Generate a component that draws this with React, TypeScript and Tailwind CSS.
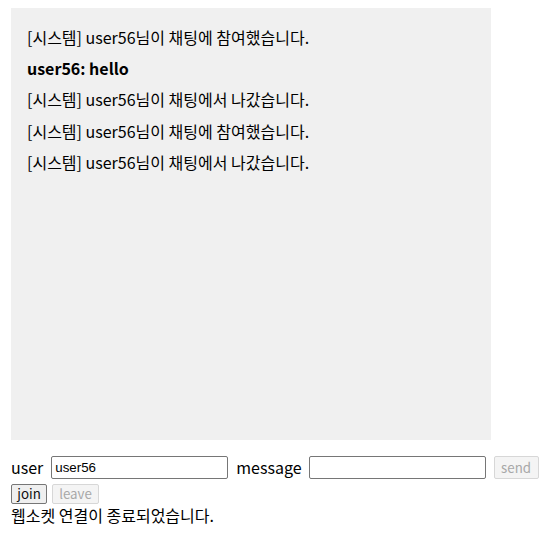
import React from 'react';

const messages = [
  { id: 1, text: '[시스템] user56님이 채팅에 참여했습니다.', bold: false },
  { id: 2, text: 'user56: hello', bold: true },
  { id: 3, text: '[시스템] user56님이 채팅에서 나갔습니다.', bold: false },
  { id: 4, text: '[시스템] user56님이 채팅에 참여했습니다.', bold: false },
  { id: 5, text: '[시스템] user56님이 채팅에서 나갔습니다.', bold: false },
];

const Btn: React.FC<{ label: string; disabled?: boolean; className?: string }> = ({ label, disabled, className }) => (
  <button
    disabled={disabled}
    className={`flex items-center justify-center rounded-[2px] border ${
      disabled ? 'border-[#d7d7d7] bg-[#f4f4f4] text-[#a8a8a8]' : 'border-[#767676] bg-[#efefef] text-[#101010]'
    } ${className ?? ''}`}
  >
    <span className="font-['Noto_Sans_CJK_KR',sans-serif] text-[13.33px] leading-none">{label}</span>
  </button>
);

const App: React.FC = () => {
  return (
    <div className="pt-2 pl-[11px] text-black text-base font-['Noto_Sans_CJK_KR','Noto_Sans',sans-serif]">
      <div className="w-[480px] h-[432px] bg-[#f0f0f0] pt-[14px] px-4">
        {messages.map((m) => (
          <div key={m.id} className={`py-1 leading-[23.2px] ${m.bold ? 'font-bold' : ''}`}>
            {m.text}
          </div>
        ))}
      </div>

      <div className="mt-4 flex items-center h-[23px]">
        <span className="leading-[23px]">user</span>
        <input
          className="ml-2 w-[177px] h-[23px] border border-[#767676] rounded-[2px] px-[3px] text-[13.33px] font-['Liberation_Sans',Arial,sans-serif] outline-none"
          defaultValue="user56"
        />
        <span className="ml-2 leading-[23px]">message</span>
        <input className="ml-[7px] w-[177px] h-[23px] border border-[#767676] rounded-[2px] px-[3px] text-[13.33px] font-['Liberation_Sans',Arial,sans-serif] outline-none" />
        <Btn label="send" disabled className="ml-2 w-[45px] h-[23px]" />
      </div>

      <div className="mt-[5px] flex gap-[5px]">
        <Btn label="join" className="w-9 h-5" />
        <Btn label="leave" disabled className="w-[47px] h-5" />
      </div>

      <div className="leading-[23px]">웹소켓 연결이 종료되었습니다.</div>
    </div>
  );
};

export default App;
